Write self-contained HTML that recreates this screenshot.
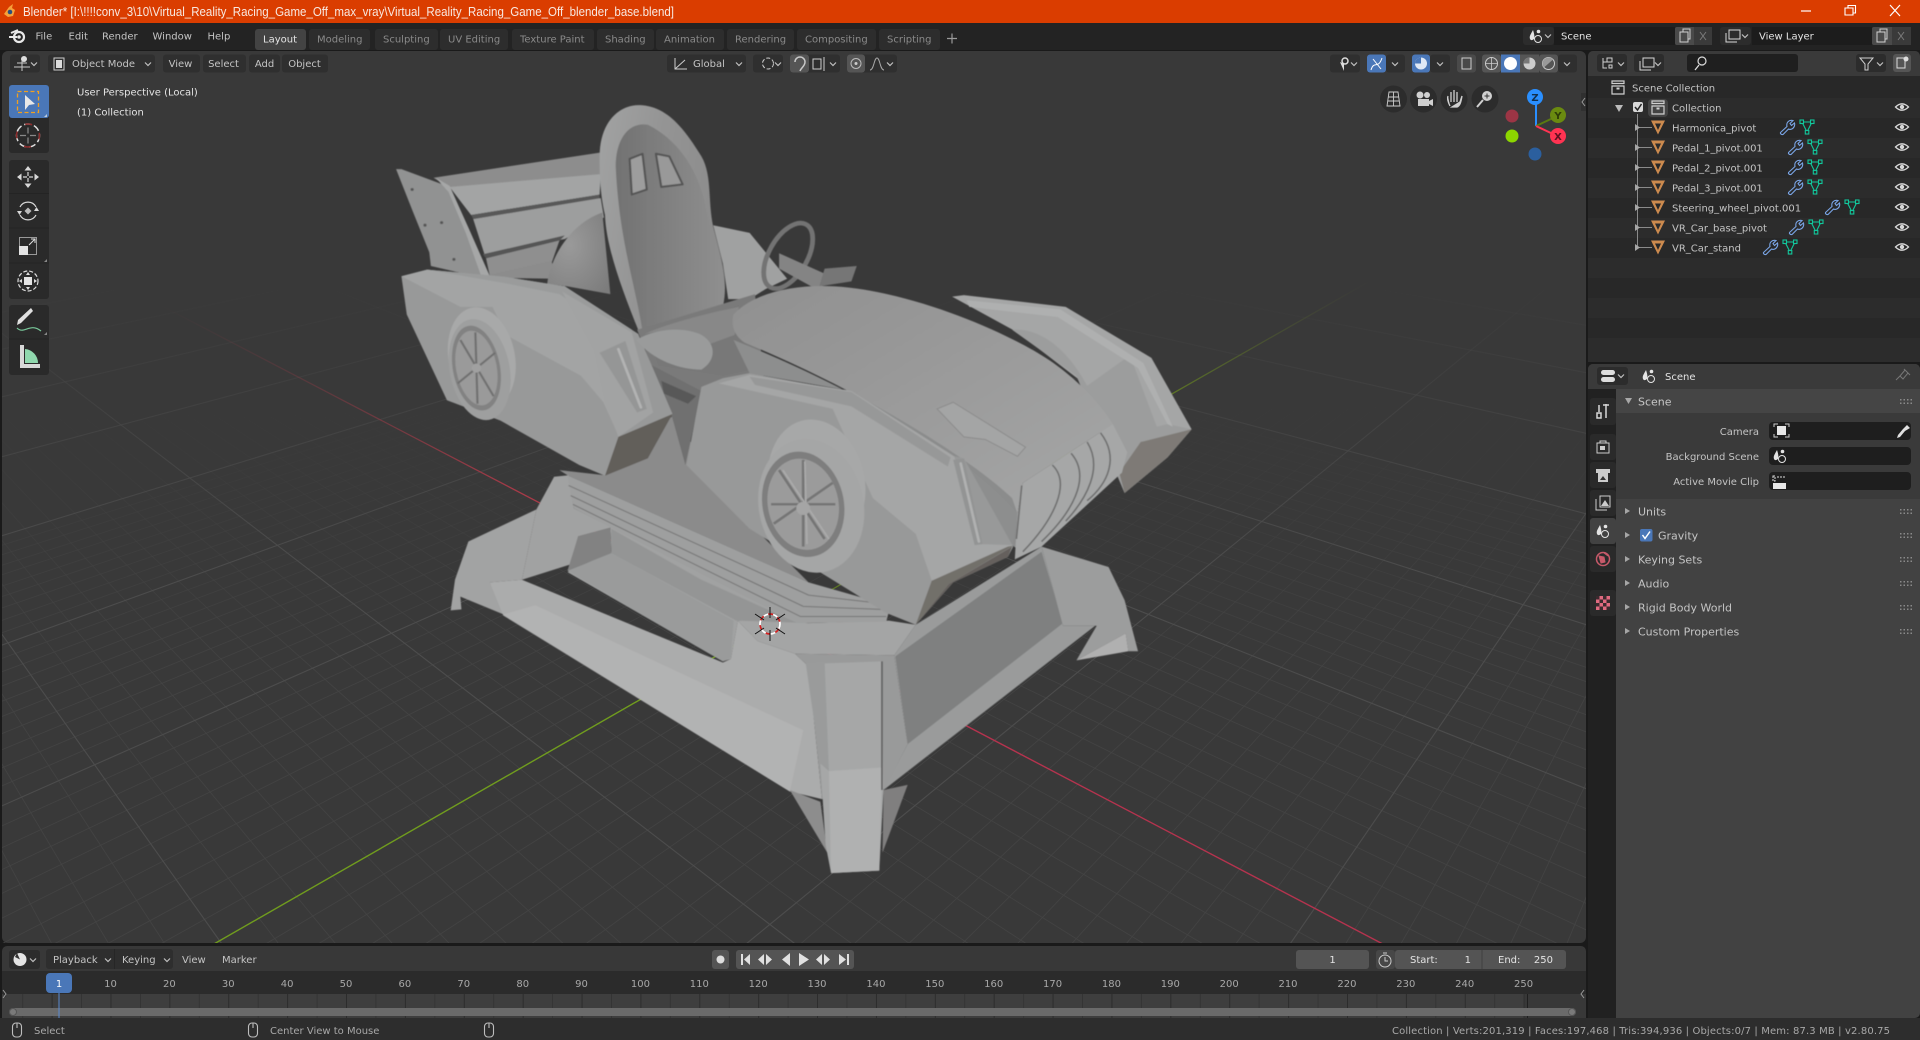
<!DOCTYPE html>
<html><head><meta charset="utf-8"><title>Blender</title>
<style>
html,body{margin:0;padding:0;width:1920px;height:1040px;overflow:hidden;background:#1a1a1a}
#vp{position:absolute;left:2px;top:51px;width:1584px;height:892px;background:#393939;border-radius:6px}
svg#ui{position:absolute;left:0;top:0;display:block}
text{font-family:"DejaVu Sans","Liberation Sans",sans-serif;font-size:10px;fill:#c4c4c4}
.m{text-anchor:middle}.e{text-anchor:end}
.d{fill:#8a8a8a}.w{fill:#e4e4e4}
.s{fill:#a8a8a8}
</style></head><body>
<div id="vp"></div>
<svg id="ui" width="1920" height="1040" viewBox="0 0 1920 1040" xmlns="http://www.w3.org/2000/svg">
<defs>
<clipPath id="vc"><rect x="2" y="51" width="1584" height="892"/></clipPath>
<filter id="soft" x="-5%" y="-5%" width="110%" height="110%"><feGaussianBlur stdDeviation="1.100"/></filter>
<linearGradient id="maj" gradientUnits="userSpaceOnUse" x1="0" y1="285" x2="0" y2="570"><stop offset="0" stop-color="#4c4c4c" stop-opacity="0"/><stop offset="1" stop-color="#4c4c4c"/></linearGradient>
<linearGradient id="min" gradientUnits="userSpaceOnUse" x1="0" y1="400" x2="0" y2="680"><stop offset="0" stop-color="#434343" stop-opacity="0"/><stop offset="1" stop-color="#434343"/></linearGradient>
<linearGradient id="rg" gradientUnits="userSpaceOnUse" x1="160" y1="305" x2="520" y2="494"><stop offset="0" stop-color="#6a3a40" stop-opacity="0"/><stop offset="1" stop-color="#a83a48"/></linearGradient>
<linearGradient id="gg" gradientUnits="userSpaceOnUse" x1="1370" y1="281" x2="1170" y2="395"><stop offset="0" stop-color="#4c5234" stop-opacity="0"/><stop offset="1" stop-color="#5c7426"/></linearGradient>
<linearGradient id="seat" x1="0" y1="0" x2="1" y2="0.3"><stop offset="0" stop-color="#a2a3a3"/><stop offset=".5" stop-color="#949494"/><stop offset="1" stop-color="#8c8c8c"/></linearGradient>
<linearGradient id="seatin" x1="0" y1="0" x2="1" y2="0"><stop offset="0" stop-color="#727272"/><stop offset=".6" stop-color="#848484"/><stop offset="1" stop-color="#8f8f8f"/></linearGradient>
<linearGradient id="hood" x1="0" y1="0" x2="1" y2="1"><stop offset="0" stop-color="#909090"/><stop offset=".5" stop-color="#9b9b9b"/><stop offset="1" stop-color="#a6a7a7"/></linearGradient>
<radialGradient id="dome" cx=".35" cy=".4" r=".8"><stop offset="0" stop-color="#9a9a9a"/><stop offset="1" stop-color="#7c7c7c"/></radialGradient>
<g id="eye"><path d="M-6.500 0Q0-6.500 6.500 0Q0 6.500-6.500 0Z" fill="none" stroke="#d8d8d8" stroke-width="1.300"/><circle r="2.200" fill="#d8d8d8"/></g>
<g id="tri"><path d="M-7-7H7L0 7Z M-3-4H3L0 2.500Z" fill-rule="evenodd" fill="#cc8a4e"/></g>
<g id="wr"><path d="M-6.500 5.500L0-.5C-1-4.500 2-7.500 6-6.500L3-3.500 4.500-1.500 7.500-4C8.500 0 5 3.500 1.500 2L-4 7.500C-5.500 8-7 6.500-6.500 5.500Z" fill="none" stroke="#7aa5e6" stroke-width="1.100"/></g>
<g id="me" fill="none" stroke="#12c79c" stroke-width="1.100"><path d="M-5-5H5L0 5Z"/><rect x="-7" y="-7" width="3.500" height="3.500" fill="#2a2a2a"/><rect x="3.500" y="-7" width="3.500" height="3.500" fill="#2a2a2a"/><rect x="-1.700" y="3.500" width="3.500" height="3.500" fill="#2a2a2a"/></g>
<g id="coll" fill="none" stroke="#d0d0d0" stroke-width="1.200"><path d="M-6-6H6V-3.500H-6Z"/><path d="M-6-1H6V7H-6Z"/><path d="M-1.500 1.500H1.500" stroke-width="2"/></g>
<g id="arr"><path d="M0-3.500L5 0 0 3.500Z" fill="#a6a6a6"/></g>
<g id="chev"><path d="M-3-1.500L0 1.500 3-1.500" fill="none" stroke="#c0c0c0" stroke-width="1.200"/></g>
<g id="grip" fill="#8a8a8a"><rect x="0" y="0" width="1.500" height="1.500"/><rect x="3.500" y="0" width="1.500" height="1.500"/><rect x="7" y="0" width="1.500" height="1.500"/><rect x="10.500" y="0" width="1.500" height="1.500"/><rect x="0" y="3.500" width="1.500" height="1.500"/><rect x="3.500" y="3.500" width="1.500" height="1.500"/><rect x="7" y="3.500" width="1.500" height="1.500"/><rect x="10.500" y="3.500" width="1.500" height="1.500"/></g>
<g id="scn"><path d="M-3-6C-5-2-7 0-6 3-5 5-3 4-2 3-1 1-2-3-3-6Z" fill="#e4e4e4"/><circle cx="2.500" cy="-4.500" r="1.800" fill="#e4e4e4"/><circle cx="2" cy="3" r="3.500" fill="none" stroke="#e4e4e4" stroke-width="1"/></g>
<g id="mouse" fill="none" stroke="#bdbdbd" stroke-width="1.100"><rect x="-4.500" y="-7" width="9" height="14" rx="3.500"/><path d="M0-7V-2"/></g>
<pattern id="ticks" patternUnits="userSpaceOnUse" x="110.500" y="0" width="58.880" height="30"><rect x="0" width="1" height="30" fill="#2c2c2c"/><rect x="29.440" width="1" height="30" fill="#343434"/></pattern>
</defs>

<!-- floor grid -->
<g clip-path="url(#vc)" fill="none">
<g stroke="url(#min)" stroke-width=".8">
<path d="M1990-75L1591 1030M1990-75L1531 1030M1990-75L1470 1030M1990-75L1411 1030M1990-75L1351 1030M1990-75L1291 1030M1990-75L1172 1030M1990-75L1112 1030M1990-75L1053 1030M1990-75L994 1030M1990-75L935 1030M1990-75L875 1030M1990-75L817 1030M1990-75L758 1030M1990-75L700 1030M1990-75L583 1030M1990-75L525 1030M1990-75L467 1030M1990-75L408 1030M1990-75L351 1030M1990-75L293 1030M1990-75L235 1030M1990-75L177 1030M1990-75L120 1030M1990-75L6 1030M1990-75L-52 1030M1990-75L-100 1025M1990-75L-100 996M1990-75L-100 969M1990-75L-100 943M1990-75L-100 918M1990-75L-100 895M1990-75L-100 872M1990-75L-100 830M1990-75L-100 811M1990-75L-100 792M1990-75L-100 775M1990-75L-100 757M1990-75L-100 741M1990-75L-100 725M1990-75L-100 710M1990-75L-100 696M1990-75L-100 669M1990-75L-100 656M1990-75L-100 643M1990-75L-100 631M1990-75L-100 620M1990-75L-100 608M1990-75L-100 598M1990-75L-100 587M1990-75L-100 577"/>
<path d="M-470-30L98 1030M-470-30L160 1030M-470-30L221 1030M-470-30L345 1030M-470-30L407 1030M-470-30L469 1030M-470-30L531 1030M-470-30L593 1030M-470-30L655 1030M-470-30L718 1030M-470-30L781 1030M-470-30L844 1030M-470-30L969 1030M-470-30L1032 1030M-470-30L1096 1030M-470-30L1159 1030M-470-30L1222 1030M-470-30L1287 1030M-470-30L1351 1030M-470-30L1414 1030M-470-30L1479 1030M-470-30L1608 1030M-470-30L1672 1030M-470-30L1700 1012M-470-30L1700 983M-470-30L1700 955M-470-30L1700 928M-470-30L1700 902M-470-30L1700 878M-470-30L1700 855M-470-30L1700 813M-470-30L1700 793M-470-30L1700 774M-470-30L1700 756M-470-30L1700 738M-470-30L1700 721M-470-30L1700 706M-470-30L1700 690M-470-30L1700 675M-470-30L1700 647M-470-30L1700 634M-470-30L1700 622M-470-30L1700 609M-470-30L1700 597M-470-30L1700 586M-470-30L1700 575M-470-30L1700 564M-470-30L1700 554"/>
</g>
<g stroke="url(#maj)" stroke-width="1.100">
<path d="M1990-75L1231 1030M1990-75L641 1030M1990-75L-100 851M1990-75L-100 682M1990-75L-100 567M1990-75L-100 484M1990-75L-100 421M1990-75L-100 371M1990-75L-100 332"/>
<path d="M-470-30L283 1030M-470-30L907 1030M-470-30L1700 834M-470-30L1700 661M-470-30L1700 544M-470-30L1700 459M-470-30L1700 395M-470-30L1700 345M-470-30L1700 304"/>
</g>
<!-- axes -->
<path d="M160 305L772 624" stroke="url(#rg)" stroke-width="1.300"/>
<path d="M772 624L1400 953" stroke="#b5334e" stroke-width="1.400"/>
<path d="M200 952L772 624" stroke="#709c1e" stroke-width="1.400"/>
<path d="M772 624L1170 395" stroke="#5c7426" stroke-width="1.300"/>
<path d="M1170 395L1370 281" stroke="url(#gg)" stroke-width="1.300"/>
</g>

<!-- MODEL -->
<g transform="translate(380,90) scale(.5357,.5102)" filter="url(#soft)">
<!-- wing -->
<path d="M100 172L415 122 412 168 130 192Z" fill="#8d8d8d"/>
<path d="M130 190L412 165 410 205 170 245Z" fill="#a3a4a4"/>
<path d="M170 245L410 205 410 213 174 253Z" fill="#585858"/>
<path d="M174 253L412 212 418 250 345 292 195 322Z" fill="#9d9e9e"/>
<path d="M192 322L345 285 335 296 198 330Z" fill="#555"/>
<path d="M198 330L335 295 320 340 205 365Z" fill="#8f8f8f"/>
<path d="M30 155L40 155 130 190 165 270 205 365 190 368 95 345 92 318 62 240Z" fill="#919292"/>
<path d="M104 172L130 188 165 270 205 365 190 368 160 280 128 200Z" fill="#a6a7a7"/>
<g fill="#555"><circle cx="60" cy="195" r="3"/><circle cx="84" cy="265" r="3"/><circle cx="115" cy="260" r="3"/><circle cx="138" cy="332" r="3"/></g>
<!-- far pod -->
<path d="M1068 405L1090 402 1280 425 1440 525 1515 665 1470 720 1390 790 1370 740 1320 580 1190 475Z" fill="#a5a6a6"/>
<path d="M1180 470C1240 465 1290 520 1320 580L1400 520 1450 660 1470 655 1515 665 1470 720 1390 790 1370 740 1300 560Z" fill="#9c9d9d"/>
<path d="M1095 412L1270 430 1425 535 1480 660 1470 655 1415 545 1265 445 1100 425Z" fill="#afb0b0"/>
<path d="M1420 690L1515 665 1470 720 1390 790 1380 750Z" fill="#7e7a76"/>
<!-- far rear rim -->
<path d="M622 265L690 280 760 370 720 390 690 410 650 410 640 340Z" fill="#a0a1a1"/>
<path d="M205 362L320 335 330 370 212 368Z" fill="#8c8c8c"/>
<!-- dome -->
<path d="M312 380C320 320 360 260 415 240L430 400 350 385Z" fill="url(#dome)"/>
<!-- seat back -->
<path d="M410 130C410 60 450 25 490 30 540 35 570 80 600 130 622 170 610 225 625 280 640 340 650 380 640 425L485 478C455 400 422 310 420 245 410 200 410 160 410 130Z" fill="url(#seat)"/>
<path d="M440 150C440 95 465 62 500 68 552 95 590 150 605 215 620 290 650 350 640 425L490 472C476 380 446 290 440 150Z" fill="url(#seatin)"/>
<path d="M466 135L490 125 498 195 470 205Z" fill="#9d9d9d" stroke="#555" stroke-width="4" stroke-linejoin="round"/>
<path d="M515 125L540 130 565 185 525 190Z" fill="#999" stroke="#555" stroke-width="4" stroke-linejoin="round"/>
<!-- steering -->
<ellipse cx="762" cy="325" rx="36" ry="70" transform="rotate(28 762 325)" fill="none" stroke="#737373" stroke-width="9"/>
<path d="M745 320L830 360 825 385 805 385 745 350Z" fill="#848484"/>
<path d="M830 350L890 345 880 375 820 385Z" fill="#767676"/>
<!-- interior -->
<path d="M480 470L700 400 720 600 600 600 545 640Z" fill="#7a7a7a"/>
<path d="M500 480L670 422 692 548 640 560 520 540Z" fill="#787878"/>
<!-- underbody -->
<path d="M335 745L420 755 545 640 700 860 800 965 350 755Z" fill="#8b8b8b"/>
<path d="M490 530L600 590 570 735 545 640Z" fill="#707070"/>
<path d="M525 570L590 600 575 615 530 595Z" fill="#585858"/>
<!-- base -->
<path d="M132 1020L140 960 165 885 292 822 265 960 205 965 240 1032 150 993 152 1018Z" fill="#a2a3a3"/>
<path d="M292 822L325 758 352 755 362 820 800 1050 668 1040 655 1115 640 1120 350 945 432 905 430 858 370 875 355 930 265 960Z" fill="#a1a2a2"/>
<path d="M370 875L430 858 432 908 350 942Z" fill="#828282"/>
<path d="M432 860L600 960 780 1045 665 1040 432 908Z" fill="#949595"/>
<path d="M350 942L432 908 660 1040 655 1112 640 1120Z" fill="#9a9b9b"/>
<path d="M205 965L265 960 640 1122 655 1115 668 1040 705 1080 775 1105 800 1130 825 1390 765 1375 230 1030Z" fill="#abacac"/>
<path d="M230 1028L290 1010 790 1255 765 1375Z" fill="#b2b3b3"/>
<path d="M668 1040L800 1045 950 1040 1000 1048 960 1108 775 1105 705 1080Z" fill="#a4a5a5"/>
<path d="M960 1108L1000 1048 1235 895 1275 1050 1335 1050 940 1372 985 1282Z" fill="#9a9b9b"/>
<path d="M962 1110L1235 905 1275 1045 985 1282Z" fill="#7f8080"/>
<path d="M775 1105L960 1108 985 1282 942 1370 825 1390 800 1130Z" fill="#999a9a"/>
<path d="M1235 895L1360 935 1390 1000 1415 1100 1397 1100 1392 1065 1300 1118 1338 1050 1275 1050Z" fill="#9c9d9d"/>
<path d="M1300 1118L1392 1065 1397 1100Z" fill="#b0b0b0"/>
<path d="M765 1372L822 1395 835 1495Z" fill="#8d8d8d"/>
<path d="M940 1372L985 1362 938 1495Z" fill="#807f7f"/>
<path d="M795 1125L937 1120 940 1370 932 1530 842 1535 832 1480 822 1320Z" fill="#a6a7a7"/>
<path d="M838 1335L937 1328 932 1530 842 1535Z" fill="#b0b1b1"/>
<path d="M795 1125L830 1120 838 1335 822 1320Z" fill="#9a9b9b"/>
<path d="M937 1120V1372" stroke="#5c5c5c" stroke-width="3"/>
<!-- layered plates -->
<path d="M350 755L800 965 900 995 950 1022 945 1042 780 1045 362 820Z" fill="#9e9f9f"/>
<g fill="none" stroke="#757575" stroke-width="2"><path d="M352 775L800 990 925 1005"/><path d="M356 795L790 1012 935 1018"/><path d="M360 812L785 1032 945 1032"/></g>
<!-- left body -->
<path d="M40 365L88 352 232 366 345 385 482 478 546 635 500 722 420 756 372 735 225 648 125 608 50 440Z" fill="#989999"/>
<path d="M40 365L88 352 345 385 470 470 446 680 417 612 375 560 235 480 210 425 150 425Z" fill="#a3a4a4"/>
<path d="M88 352L232 366 345 385 470 470 462 492 335 400 230 378Z" fill="#9a9b9b"/>
<path d="M340 395L470 475 510 632 445 680 420 610 400 510Z" fill="#a2a3a3"/>
<path d="M410 515L458 492 498 625 480 632Z" fill="#959696"/>
<path d="M445 508L487 622" stroke="#b2b3b3" stroke-width="5" stroke-linecap="round"/>
<path d="M445 680L546 635 500 722 420 756Z" fill="#625e5a"/>
<ellipse cx="190" cy="525" rx="62" ry="100" transform="rotate(-10 190 525)" fill="#a8a9a9"/>
<ellipse cx="186" cy="548" rx="56" ry="100" transform="rotate(-10 186 548)" fill="#9e9f9f"/>
<ellipse cx="180" cy="545" rx="44" ry="84" transform="rotate(-10 180 545)" fill="#828282"/>
<ellipse cx="180" cy="545" rx="38" ry="74" transform="rotate(-10 180 545)" fill="#9a9a9a"/>
<g stroke="#707070" stroke-width="4"><path d="M150 490L212 600"/><path d="M145 575L215 515"/><path d="M178 475L182 615"/></g>
<circle cx="180" cy="545" r="9" fill="#a0a0a0"/>
<!-- cushion -->
<path d="M495 478C530 460 600 440 670 425L662 480 610 500C580 470 530 470 495 478Z" fill="#888"/>
<path d="M478 490C520 465 570 465 600 480 628 497 628 530 600 548 560 548 510 530 478 490Z" fill="#9a9b9b"/>
<!-- hood -->
<path d="M880 590L1190 770 1190 900 1060 800Z" fill="#8b8c8c"/>
<path d="M660 440C700 395 780 380 850 385 1000 395 1180 480 1250 530 1320 580 1360 640 1368 655L1200 770 1190 830 1180 800C1100 720 900 590 680 495 660 480 655 460 660 440Z" fill="url(#hood)"/>
<path d="M660 490C900 590 1100 720 1190 830L1180 900 1060 720 880 590 690 555Z" fill="#8d8e8e"/>
<path d="M1040 625L1070 612 1205 700 1190 718 1130 685 1090 680Z" fill="#a4a5a5" stroke="#8c8c8c" stroke-width="2"/>
<!-- nose/grille -->
<path d="M1200 770L1368 655 1395 710 1385 750 1235 895 1185 920 1190 830Z" fill="#a6a7a7"/>
<g fill="none" stroke="#6e6e6e" stroke-width="3"><path d="M1255 735C1290 770 1260 840 1200 905"/><path d="M1290 712C1330 760 1290 830 1235 885"/><path d="M1320 690C1350 740 1320 800 1280 845"/><path d="M1345 672C1380 720 1360 770 1320 805"/><path d="M1198 775L1188 880"/></g>
<!-- front body -->
<path d="M572 735L600 582 640 565 690 555 880 592 1060 715 1090 722 1182 895 1172 915 1070 965 1000 1048 945 1025 690 860Z" fill="#989999"/>
<path d="M632 575L690 558 880 590 1072 718 1122 890 1182 892 1062 968 1030 962 1000 870 920 800 845 625Z" fill="#a5a6a6"/>
<path d="M690 562L880 592 1065 720 1060 738 880 620 700 578Z" fill="#979898"/>
<path d="M1070 725L1090 722 1125 890 1110 892Z" fill="#939494"/>
<path d="M1084 732L1118 885" stroke="#b0b1b1" stroke-width="5" stroke-linecap="round"/>
<path d="M1172 895L1182 893 1062 968 1000 1048 1030 962Z" fill="#726f6b"/>
<path d="M1000 1048L1062 968 1180 895 1172 915 1070 965Z" fill="#65615d"/>
<ellipse cx="815" cy="770" rx="90" ry="125" transform="rotate(-10 815 770)" fill="#a7a8a8"/>
<ellipse cx="805" cy="815" rx="98" ry="132" transform="rotate(-10 805 815)" fill="#a5a6a6"/>
<ellipse cx="790" cy="812" rx="76" ry="104" transform="rotate(-10 790 812)" fill="#7e7e7e"/>
<ellipse cx="790" cy="812" rx="66" ry="90" transform="rotate(-10 790 812)" fill="#9b9b9b"/>
<g stroke="#747474" stroke-width="5"><path d="M745 745L830 880"/><path d="M735 850L845 770"/><path d="M790 725V895"/><path d="M730 812H850"/></g>
<g stroke="#acacac" stroke-width="3"><path d="M752 745L838 880"/><path d="M793 728L797 890"/></g>
<circle cx="790" cy="820" r="13" fill="#a5a5a5"/>
</g>

<!-- 3D cursor -->
<g transform="translate(770,624)"><circle r="10" fill="none" stroke="#fff" stroke-width="1.700" stroke-dasharray="5 5"/><circle r="10" fill="none" stroke="#d42020" stroke-width="1.700" stroke-dasharray="5 5" stroke-dashoffset="5"/><g stroke="#111" stroke-width="1"><path d="M0-17V-6M0 6V17M-15-10L-6-4M6 4L15 10M-15 10L-6 4M6-4L15-10"/></g></g>

<!-- title bar -->
<rect x="0" y="0" width="1920" height="23" fill="#da3d00"/>
<path d="M4 14L9 7 13 4 12 8 15 10 13 16 8 17Z" fill="#f7a13a"/><circle cx="10" cy="12" r="2.300" fill="#2a4f80"/>
<text x="23" y="16" textLength="651" lengthAdjust="spacingAndGlyphs" style="font:12.500px 'Liberation Sans',sans-serif;fill:#f8e8e0">Blender* [I:\!!!!conv_3\10\Virtual_Reality_Racing_Game_Off_max_vray\Virtual_Reality_Racing_Game_Off_blender_base.blend]</text>
<path d="M1801 11H1811" stroke="#fff" stroke-width="1.200"/>
<path d="M1845 8H1853V15H1845ZM1848 8V5.500H1855.500V13H1853" fill="none" stroke="#fff" stroke-width="1.100"/>
<path d="M1890 5L1900 16M1900 5L1890 16" stroke="#fff" stroke-width="1.200"/>

<!-- top bar -->
<rect x="0" y="23" width="1920" height="27" fill="#232323"/>
<g transform="translate(18,36)"><circle cx="1" cy="1" r="5" fill="none" stroke="#e8e8e8" stroke-width="2.200"/><path d="M-9 1H-1M-7-3L0-6" stroke="#e8e8e8" stroke-width="2" fill="none"/><circle cx="1" cy="1" r="1.800" fill="#e8e8e8"/></g>
<text x="35.500" y="39.500">File</text><text x="68.500" y="39.500">Edit</text><text x="102" y="39.500">Render</text><text x="152.500" y="39.500">Window</text><text x="207.500" y="39.500">Help</text>
<g fill="#2d2d2d"><rect x="255" y="29" width="51" height="21" rx="3" fill="#434343"/><rect x="309" y="29" width="61" height="21" rx="3"/><rect x="375" y="29" width="63" height="21" rx="3"/><rect x="440" y="29" width="68" height="21" rx="3"/><rect x="512" y="29" width="82" height="21" rx="3"/><rect x="597" y="29" width="57" height="21" rx="3"/><rect x="656" y="29" width="68" height="21" rx="3"/><rect x="727" y="29" width="67" height="21" rx="3"/><rect x="797" y="29" width="79" height="21" rx="3"/><rect x="879" y="29" width="61" height="21" rx="3"/></g>
<text x="263" y="42.500" class="w">Layout</text><text x="317" y="42.500" class="d">Modeling</text><text x="383" y="42.500" class="d">Sculpting</text><text x="448" y="42.500" class="d">UV Editing</text><text x="520" y="42.500" class="d">Texture Paint</text><text x="605" y="42.500" class="d">Shading</text><text x="664" y="42.500" class="d">Animation</text><text x="735" y="42.500" class="d">Rendering</text><text x="805" y="42.500" class="d">Compositing</text><text x="887" y="42.500" class="d">Scripting</text>
<path d="M947 38.500H957M952 33.500V43.500" stroke="#9a9a9a" stroke-width="1.200"/>
<!-- scene selector -->
<rect x="1523" y="27" width="31" height="18" rx="3" fill="#2c2c2c"/><use href="#scn" x="1536" y="36"/><use href="#chev" x="1548" y="36"/>
<rect x="1554" y="27" width="121" height="18" fill="#1c1c1c"/><text x="1561" y="39.500" class="w">Scene</text>
<rect x="1675" y="27" width="37" height="18" rx="2" fill="#4a4a4a"/><rect x="1694" y="27" width="18" height="18" fill="#3a3a3a"/>
<path d="M1680 32H1688V42H1680ZM1683 32V29H1690V39H1688" fill="none" stroke="#d0d0d0"/><path d="M1700 32L1706 40M1706 32L1700 40" stroke="#7a7a7a"/>
<rect x="1720" y="27" width="31" height="18" rx="3" fill="#2c2c2c"/><path d="M1729 30H1740V39H1729ZM1726 33V42H1737" fill="none" stroke="#d8d8d8"/><use href="#chev" x="1745" y="36"/>
<rect x="1752" y="27" width="120" height="18" fill="#1c1c1c"/><text x="1759" y="39.500" class="w">View Layer</text>
<rect x="1872" y="27" width="39" height="18" rx="2" fill="#4a4a4a"/><rect x="1892" y="27" width="19" height="18" fill="#3a3a3a"/>
<path d="M1877 32H1885V42H1877ZM1880 32V29H1887V39H1885" fill="none" stroke="#d0d0d0"/><path d="M1898 32L1904 40M1904 32L1898 40" stroke="#7a7a7a"/>

<!-- 3D header -->
<g fill="#2f2f2f">
<rect x="10" y="54.500" width="30" height="18" rx="3"/><rect x="48" y="54.500" width="107" height="18" rx="3"/><rect x="163" y="54.500" width="37" height="18" rx="3"/><rect x="203" y="54.500" width="43" height="18" rx="3"/><rect x="249" y="54.500" width="31" height="18" rx="3"/><rect x="282" y="54.500" width="46" height="18" rx="3"/>
<rect x="667" y="54.500" width="79" height="18" rx="3"/><rect x="753" y="54.500" width="30" height="18" rx="3"/><rect x="790" y="54.500" width="50" height="18" rx="3"/><rect x="847" y="54.500" width="50" height="18" rx="3"/>
<rect x="1330" y="54.500" width="30" height="18" rx="3"/><rect x="1386" y="54.500" width="19" height="18" rx="3"/><rect x="1430" y="54.500" width="20" height="18" rx="3"/><rect x="1558" y="54.500" width="19" height="18" rx="3"/>
</g>
<rect x="790" y="54.500" width="19" height="18" rx="3" fill="#555"/><rect x="847" y="54.500" width="18" height="18" rx="3" fill="#555"/>
<rect x="1367" y="54.500" width="19" height="18" rx="3" fill="#4a77b8"/><rect x="1412" y="54.500" width="18" height="18" rx="3" fill="#4a77b8"/><rect x="1457" y="54.500" width="19" height="18" rx="3" fill="#4a4a4a"/>
<rect x="1482" y="54.500" width="19" height="18" rx="3" fill="#555"/><rect x="1501" y="54.500" width="19" height="18" fill="#4a77b8"/><rect x="1520" y="54.500" width="19" height="18" fill="#555"/><rect x="1539" y="54.500" width="19" height="18" rx="3" fill="#555"/>
<path d="M14 67H30M22 59V71M17 63H27" stroke="#c8c8c8" fill="none"/><circle cx="24" cy="59" r="3" fill="#ddd"/><use href="#chev" x="34" y="64"/>
<rect x="54" y="58" width="10" height="12" fill="none" stroke="#ccc"/><rect x="56" y="60" width="6" height="8" fill="#ddd"/>
<text x="72" y="67">Object Mode</text><use href="#chev" x="148" y="64"/>
<text x="180.500" y="67" class="m">View</text><text x="223.500" y="67" class="m">Select</text><text x="264.500" y="67" class="m">Add</text><text x="304.500" y="67" class="m">Object</text>
<path d="M675 58V69H687M675 69L685 60" stroke="#ccc" fill="none"/><text x="693" y="67">Global</text><use href="#chev" x="739" y="64"/>
<circle cx="768" cy="63.500" r="5.500" fill="none" stroke="#ccc" stroke-dasharray="4 2"/><use href="#chev" x="778" y="64"/>
<path d="M795 62A5 5 0 0 1 805 62C805 66 801 68 800 71" fill="none" stroke="#c8c8c8" stroke-width="1.500"/>
<path d="M813 59H821V69H813ZM824 57V71" stroke="#ccc" fill="none"/><use href="#chev" x="833" y="64"/>
<circle cx="856" cy="63.500" r="5" fill="none" stroke="#bbb"/><circle cx="856" cy="63.500" r="1.500" fill="#ccc"/><path d="M870 70C874 70 874 58 877 58S880 70 884 70" fill="none" stroke="#a8a8a8"/><use href="#chev" x="890" y="64"/>
<g transform="translate(1345,63)"><circle cy="-2" r="3" fill="none" stroke="#ddd" stroke-width="1.500"/><path d="M-5 -1L-1 8 -1 1Z" fill="#ddd"/></g><use href="#chev" x="1354" y="64"/>
<path d="M1371 70C1374 60 1378 70 1382 58M1373 59L1381 69" stroke="#fff" fill="none"/><use href="#chev" x="1395" y="64"/>
<circle cx="1421" cy="63.500" r="6" fill="#dfe8f5"/><path d="M1421 63.500V57.500A6 6 0 0 0 1415 63.500Z" fill="#4a77b8"/><use href="#chev" x="1440" y="64"/>
<rect x="1462" y="58" width="9" height="11" fill="none" stroke="#ccc"/>
<circle cx="1491.500" cy="63.500" r="6" fill="none" stroke="#ccc"/><path d="M1491.500 57.500V69.500M1485.500 63.500H1497.500" stroke="#ccc" stroke-width=".8"/>
<circle cx="1510.500" cy="63.500" r="6.500" fill="#fff"/>
<circle cx="1529.500" cy="63.500" r="6" fill="#ccc"/><path d="M1529.500 63.500V57.500A6 6 0 0 0 1523.500 63.500Z" fill="#777"/>
<circle cx="1548.500" cy="63.500" r="6" fill="none" stroke="#ccc"/><path d="M1544 67.500A6 6 0 0 1 1553 59.500Z" fill="#999"/>
<use href="#chev" x="1567" y="64"/>

<!-- toolbar -->
<rect x="9" y="85" width="40" height="68" rx="3" fill="#2a2a2a"/><rect x="9" y="85" width="40" height="33" rx="3" fill="#4a77b8"/>
<rect x="9" y="160" width="40" height="139" rx="3" fill="#2a2a2a"/><rect x="9" y="305" width="40" height="70" rx="3" fill="#2a2a2a"/>
<path d="M9 193.500H49M9 228H49M9 263H49M9 339H49" stroke="#242424"/>
<rect x="17.500" y="91.500" width="21" height="21" fill="none" stroke="#f0a020" stroke-width="1.300" stroke-dasharray="4 2.500"/><path d="M25 95V110L29 105 35 104Z" fill="#e8e8e8"/>
<path d="M47 114V117H44Z" fill="#bcd"/>
<g transform="translate(28,135.500)"><circle r="11.500" fill="none" stroke="#ddd" stroke-width="1.500" stroke-dasharray="7 3"/><circle r="11.500" fill="none" stroke="#8e2a2a" stroke-width="1.500" stroke-dasharray="7 11" stroke-dashoffset="3"/><path d="M0-8V-2M0 2V8M-8 0H-2M2 0H8" stroke="#888" stroke-width="1.300"/></g>
<g transform="translate(28,177)" fill="#d8d8d8"><path d="M0-11L3.500-6.500H-3.500ZM0 11L3.500 6.500H-3.500ZM-11 0L-6.500-3.500V3.500ZM11 0L6.500-3.500V3.500Z"/><path d="M0-5V-1M0 1V5M-5 0H-1M1 0H5" stroke="#d8d8d8" stroke-width="1.200"/></g>
<g transform="translate(28,211)"><path d="M-8-4A9 9 0 0 1 8-4M-8 4A9 9 0 0 0 8 4" fill="none" stroke="#d8d8d8" stroke-width="1.200"/><path d="M0-3.500L3.500 0 0 3.500-3.500 0Z" fill="#bbb"/><path d="M-11 0H-6L-8.500 4ZM11 0H6L8.500-4Z" fill="#d8d8d8"/></g>
<g transform="translate(28,246)"><rect x="-8.500" y="-8.500" width="17" height="17" fill="none" stroke="#999" stroke-width="1"/><rect x="-9" y="0" width="9" height="9" fill="#e4e4e4"/><path d="M1-1L7-7M3-7H7V-3" stroke="#ddd" fill="none"/></g>
<path d="M47 259V262H44Z" fill="#888"/>
<g transform="translate(28,281)"><circle r="10" fill="none" stroke="#ddd" stroke-width="1.200" stroke-dasharray="4 2"/><rect x="-4" y="-4" width="8" height="8" fill="#e4e4e4"/><path d="M0-9L2-6H-2ZM0 9L2 6H-2ZM-9 0L-6-2V2ZM9 0L6-2V2Z" fill="#ddd"/></g>
<path d="M18 320L31 308 33 311 21 323 17 325Z" fill="#e0e0e0"/><path d="M17 328C24 335 30 322 41 331" fill="none" stroke="#78c89a" stroke-width="1.200"/><path d="M47 332V335H44Z" fill="#888"/>
<path d="M20 345H24V364H40V368H20Z" fill="#d8d8d8"/><path d="M25 349A14 14 0 0 1 38 363H25Z" fill="#90d8ae"/>
<text x="77" y="95.500" class="w">User Perspective (Local)</text><text x="77" y="115.500" class="w">(1) Collection</text>

<!-- nav gizmos -->
<g fill="#2c2c2c"><circle cx="1393.500" cy="99" r="13.500"/><circle cx="1423.500" cy="99" r="13.500"/><circle cx="1454" cy="99" r="13.500"/><circle cx="1485" cy="99" r="13.500"/></g>
<path d="M1389 92H1398L1400 106H1387ZM1393.500 92V106M1388 97H1399M1387.500 101H1399.500" fill="none" stroke="#ccc" stroke-width=".9"/>
<g fill="#d0d0d0"><circle cx="1420" cy="95" r="3.500"/><circle cx="1427" cy="95" r="3"/><rect x="1418" y="99" width="11" height="7"/><path d="M1429 101L1433 99V106L1429 104Z"/></g>
<path d="M1450 106C1448 102 1447 98 1448 96M1451 102V92M1454 102V90M1457 102V92M1460 102L1462 96C1461 102 1460 106 1457 107H1452Z" fill="#d0d0d0" stroke="#d0d0d0" stroke-width="1.300"/>
<circle cx="1487" cy="96" r="5" fill="#d0d0d0"/><path d="M1483 100L1477 107" stroke="#d0d0d0" stroke-width="2"/><path d="M1484.500 96H1489.500M1487 93.500V98.500" stroke="#333"/>
<!-- axis gizmo -->
<path d="M1536 126V104" stroke="#2a8fff" stroke-width="2"/><path d="M1536 126L1553 118" stroke="#5a7a10" stroke-width="2"/><path d="M1536 126L1553 134" stroke="#ff3352" stroke-width="2"/>
<circle cx="1512" cy="116" r="6.500" fill="#9c3545"/><circle cx="1512" cy="136" r="6.500" fill="#8cd600"/><circle cx="1535" cy="154" r="6.500" fill="#2b5f9e"/>
<circle cx="1535" cy="97" r="8" fill="#2a8fff"/><circle cx="1558" cy="115" r="8" fill="#6a8a10"/><circle cx="1558" cy="136" r="8" fill="#ff3352"/>
<text x="1535" y="101" class="m" style="font-weight:bold;fill:#12304f">Z</text><text x="1558" y="119" class="m" style="font-weight:bold;fill:#2e3c08">Y</text><text x="1558" y="140" class="m" style="font-weight:bold;fill:#5c1020">X</text>
<path d="M1581 93H1586V111H1581Z" fill="#303030"/><path d="M1585 98L1582 102 1585 106" stroke="#999" fill="none"/>

<!-- outliner -->
<rect x="1588" y="51" width="332" height="311" rx="5" fill="#282828"/>
<path d="M1588 76V56a5 5 0 0 1 5-5H1915a5 5 0 0 1 5 5V76Z" fill="#3a3a3a"/>
<g fill="#2c2c2c"><rect x="1597" y="54" width="30" height="18" rx="3"/><rect x="1634" y="54" width="30" height="18" rx="3"/><rect x="1856" y="54" width="30" height="18" rx="3"/></g>
<rect x="1687" y="54" width="111" height="18" rx="3" fill="#1f1f1f"/><rect x="1893" y="54" width="18" height="18" rx="3" fill="#555"/>
<path d="M1603 58V68H1607M1603 62H1607M1607 58H1612V62H1607ZM1609 65H1612V68H1609Z" fill="none" stroke="#d0d0d0"/><use href="#chev" x="1621" y="64"/>
<path d="M1643 58H1654V67H1643ZM1640 61V70H1651" fill="none" stroke="#d8d8d8"/><use href="#chev" x="1658" y="64"/>
<circle cx="1702" cy="61" r="4" fill="none" stroke="#ddd" stroke-width="1.200"/><path d="M1699 65L1695 70" stroke="#ddd" stroke-width="1.300"/>
<path d="M1860 58H1873L1868 64V70H1865V64Z" fill="none" stroke="#d0d0d0"/><use href="#chev" x="1880" y="64"/>
<rect x="1897" y="58" width="8" height="10" fill="none" stroke="#ddd"/><circle cx="1906" cy="59" r="2.500" fill="#ddd"/>
<g fill="#2c2c2c"><rect x="1588" y="98" width="332" height="20"/><rect x="1588" y="138" width="332" height="20"/><rect x="1588" y="178" width="332" height="20"/><rect x="1588" y="218" width="332" height="20"/><rect x="1588" y="258" width="332" height="20"/><rect x="1588" y="298" width="332" height="20"/><rect x="1588" y="338" width="332" height="24"/></g>
<use href="#coll" x="1618" y="87"/><text x="1632" y="91.500">Scene Collection</text>
<path d="M1615 105H1623L1619 112Z" fill="#bbb"/>
<rect x="1633" y="102" width="10" height="10" rx="2" fill="#d8d8d8"/><path d="M1635 107L1637.500 110 1641.500 104" stroke="#222" stroke-width="1.500" fill="none"/>
<rect x="1648" y="99" width="20" height="18" rx="4" fill="#444"/><use href="#coll" x="1658" y="107"/>
<text x="1672" y="111.500">Collection</text><use href="#eye" x="1902" y="107"/>
<path d="M1637.500 114V247" stroke="#8a8a8a"/>
<g stroke="#8a8a8a"><path d="M1637 127.500H1652M1637 147.500H1652M1637 167.500H1652M1637 187.500H1652M1637 207.500H1652M1637 227.500H1652M1637 247.500H1652"/></g>
<use href="#arr" x="1635" y="127.500"/><use href="#arr" x="1635" y="147.500"/><use href="#arr" x="1635" y="167.500"/><use href="#arr" x="1635" y="187.500"/><use href="#arr" x="1635" y="207.500"/><use href="#arr" x="1635" y="227.500"/><use href="#arr" x="1635" y="247.500"/>
<use href="#tri" x="1658" y="127.500"/><use href="#tri" x="1658" y="147.500"/><use href="#tri" x="1658" y="167.500"/><use href="#tri" x="1658" y="187.500"/><use href="#tri" x="1658" y="207.500"/><use href="#tri" x="1658" y="227.500"/><use href="#tri" x="1658" y="247.500"/>
<text x="1672" y="131.500">Harmonica_pivot</text><text x="1672" y="151.500">Pedal_1_pivot.001</text><text x="1672" y="171.500">Pedal_2_pivot.001</text><text x="1672" y="191.500">Pedal_3_pivot.001</text><text x="1672" y="211.500">Steering_wheel_pivot.001</text><text x="1672" y="231.500">VR_Car_base_pivot</text><text x="1672" y="251.500">VR_Car_stand</text>
<use href="#wr" x="1787" y="127"/><use href="#me" x="1807" y="127"/><use href="#wr" x="1795" y="147"/><use href="#me" x="1815" y="147"/><use href="#wr" x="1795" y="167"/><use href="#me" x="1815" y="167"/><use href="#wr" x="1795" y="187"/><use href="#me" x="1815" y="187"/><use href="#wr" x="1832" y="207"/><use href="#me" x="1852" y="207"/><use href="#wr" x="1796" y="227"/><use href="#me" x="1816" y="227"/><use href="#wr" x="1770" y="247"/><use href="#me" x="1790" y="247"/>
<use href="#eye" x="1902" y="127"/><use href="#eye" x="1902" y="147"/><use href="#eye" x="1902" y="167"/><use href="#eye" x="1902" y="187"/><use href="#eye" x="1902" y="207"/><use href="#eye" x="1902" y="227"/><use href="#eye" x="1902" y="247"/>

<!-- properties -->
<rect x="1588" y="364" width="332" height="654" rx="5" fill="#424242"/>
<rect x="1588" y="389" width="28" height="629" fill="#212121"/>
<path d="M1588 389V369a5 5 0 0 1 5-5H1915a5 5 0 0 1 5 5V389Z" fill="#3a3a3a"/>
<rect x="1597" y="367" width="31" height="18" rx="3" fill="#2c2c2c"/><rect x="1601" y="370" width="14" height="5" rx="2.500" fill="#ddd"/><rect x="1601" y="377" width="14" height="5" rx="2.500" fill="#ddd"/><use href="#chev" x="1621" y="376"/>
<use href="#scn" x="1649" y="376"/><text x="1665" y="380" class="w">Scene</text>
<path d="M1905 370L1908 373 1903 379 1900 376ZM1900 376L1896 380M1904 369L1910 375" stroke="#777" fill="none"/>
<g fill="#2a2a2a"><rect x="1590" y="398" width="26" height="27" rx="3"/><rect x="1590" y="434" width="26" height="26" rx="3"/><rect x="1590" y="462" width="26" height="26" rx="3"/><rect x="1590" y="490" width="26" height="26" rx="3"/><rect x="1590" y="546" width="26" height="26" rx="3"/><rect x="1590" y="590" width="26" height="26" rx="3"/></g>
<rect x="1590" y="518" width="26" height="26" rx="3" fill="#424242"/>
<path d="M1599 405V412M1597 413H1601V418H1597ZM1606 404V418M1603 405H1609" stroke="#d8d8d8" stroke-width="1.500" fill="none"/>
<path d="M1597 443H1609V453H1597ZM1600 443V441H1606V443" fill="none" stroke="#ccc"/><rect x="1600" y="446" width="5" height="4" fill="#ccc"/>
<path d="M1596 469H1610V473H1596ZM1598 473V482H1608V473" fill="#ccc"/><path d="M1600 480L1603 476 1606 480Z" fill="#333"/>
<path d="M1600 496H1610V507H1600ZM1596 499V510H1607" fill="none" stroke="#ccc"/><path d="M1601 506L1605 500 1609 506Z" fill="#ccc"/>
<use href="#scn" x="1603" y="531"/>
<circle cx="1603" cy="559" r="6.500" fill="none" stroke="#c85a6a" stroke-width="1.500"/><path d="M1599 556L1604 557 1605 562 1601 563ZM1604 553L1608 556" fill="#c85a6a" stroke="#c85a6a"/>
<rect x="1596" y="596" width="14" height="14" fill="#e06a80"/><path d="M1596 596h3.500v3.500h-3.500zM1603 596h3.500v3.500h-3.500zM1599.500 599.500h3.500v3.500h-3.500zM1606.500 599.500h3.500v3.500h-3.500zM1596 603h3.500v3.500h-3.500zM1603 603h3.500v3.500h-3.500zM1599.500 606.500h3.500v3.500h-3.500zM1606.500 606.500h3.500v3.500h-3.500z" fill="#3a2a2e"/>
<!-- scene panel -->
<rect x="1616" y="389" width="304" height="24" fill="#454545"/>
<rect x="1616" y="413" width="304" height="86" fill="#3a3a3a"/>
<path d="M1625 398H1632L1628.500 404Z" fill="#a8a8a8"/><text x="1638" y="405.500" class="s" style="fill:#c8c8c8;font-size:11px">Scene</text>
<use href="#grip" x="1900" y="399"/>
<text x="1759" y="435" class="e">Camera</text><text x="1759" y="460" class="e">Background Scene</text><text x="1759" y="485" class="e">Active Movie Clip</text>
<g fill="#1e1e1e"><rect x="1769" y="422" width="142" height="18" rx="4"/><rect x="1769" y="447" width="142" height="18" rx="4"/><rect x="1769" y="472" width="142" height="18" rx="4"/></g>
<rect x="1777" y="426" width="9" height="9" fill="#e8e8e8"/><path d="M1774 427V424H1778M1789 427V424H1785M1774 434V437H1778M1789 434V437H1785" stroke="#ccc" fill="none"/>
<path d="M1907 425L1910 428 1905 431 1900 437 1897 438 1898 435 1903 429Z" fill="#e0e0e0"/>
<use href="#scn" x="1780" y="456"/>
<rect x="1773" y="483" width="13" height="6" fill="#e8e8e8"/><path d="M1773 476H1775V481H1773ZM1777 477H1786" stroke="#ddd" fill="none" stroke-dasharray="2 1"/>
<g fill="#a6a6a6"><path d="M1625 508V514L1630 511Z"/><path d="M1625 532V538L1630 535Z"/><path d="M1625 556V562L1630 559Z"/><path d="M1625 580V586L1630 583Z"/><path d="M1625 604V610L1630 607Z"/><path d="M1625 628V634L1630 631Z"/></g>
<text x="1638" y="515.500" style="font-size:11px">Units</text>
<rect x="1640" y="529" width="12.500" height="12.500" rx="2" fill="#4a77b8"/><path d="M1642.500 535L1645 538.500 1650 531.500" stroke="#fff" stroke-width="1.500" fill="none"/>
<text x="1658" y="539.500" style="font-size:11px">Gravity</text>
<text x="1638" y="563.500" style="font-size:11px">Keying Sets</text><text x="1638" y="587.500" style="font-size:11px">Audio</text><text x="1638" y="611.500" style="font-size:11px">Rigid Body World</text><text x="1638" y="635.500" style="font-size:11px">Custom Properties</text>
<use href="#grip" x="1900" y="509"/><use href="#grip" x="1900" y="533"/><use href="#grip" x="1900" y="557"/><use href="#grip" x="1900" y="581"/><use href="#grip" x="1900" y="605"/><use href="#grip" x="1900" y="629"/>

<!-- timeline -->
<rect x="2" y="946" width="1584" height="72" rx="5" fill="#383838"/>
<rect x="2" y="971" width="1584" height="23" fill="#2b2b2b"/>
<rect x="2" y="994" width="1584" height="24" fill="#3e3e3e"/><rect x="2" y="994" width="1584" height="24" fill="url(#ticks)"/>
<rect x="1525" y="994" width="61" height="24" fill="#383838"/><path d="M1527.500 994V1018" stroke="#1f1f1f"/>
<rect x="9" y="950" width="31" height="19" rx="3" fill="#2c2c2c"/><circle cx="20" cy="959.500" r="6.500" fill="#e4e4e4"/><path d="M20 959.500L17 953 15 957Z" fill="#333"/><use href="#chev" x="33" y="960"/>
<rect x="46" y="949" width="127" height="20" rx="3" fill="#2e2e2e"/><path d="M114.500 949V969" stroke="#262626"/>
<text x="53" y="963">Playback</text><use href="#chev" x="108" y="960"/><text x="122" y="963">Keying</text><use href="#chev" x="167" y="960"/>
<text x="182" y="963">View</text><text x="222" y="963">Marker</text>
<rect x="712" y="950" width="17" height="19" rx="3" fill="#545454"/><circle cx="720.500" cy="959.500" r="4" fill="#ddd"/>
<rect x="736" y="950" width="118" height="19" rx="3" fill="#545454"/>
<g fill="#e0e0e0"><path d="M741 954H743V965H741ZM750 954V965L744 959.500Z"/><path d="M764 954V965L758 959.500ZM766 954V965L772 959.500Z"/><path d="M790 953V966L782 959.500Z"/><path d="M799 953V966L809 959.500Z"/><path d="M822 954V965L816 959.500ZM824 954V965L830 959.500Z"/><path d="M839 954V965L846 959.500ZM847 954H849V965H847Z"/></g>
<rect x="1296" y="950" width="73" height="19" rx="3" fill="#545454"/><text x="1332.500" y="963" class="m w">1</text>
<rect x="1376" y="950" width="19" height="19" rx="3" fill="#474747"/><circle cx="1385" cy="961" r="6" fill="none" stroke="#ccc"/><path d="M1385 957V961H1388M1383 953H1387" stroke="#ccc" fill="none"/>
<rect x="1395" y="950" width="171" height="19" rx="3" fill="#545454"/><path d="M1482 950V969" stroke="#3f3f3f"/>
<text x="1410" y="963" class="w">Start:</text><text x="1471" y="963" class="e w">1</text><text x="1498" y="963" class="w">End:</text><text x="1553" y="963" class="e w">250</text>
<text x="110.500" y="987" class="m s">10</text><text x="169.400" y="987" class="m s">20</text><text x="228.300" y="987" class="m s">30</text><text x="287.100" y="987" class="m s">40</text><text x="346" y="987" class="m s">50</text><text x="404.900" y="987" class="m s">60</text><text x="463.800" y="987" class="m s">70</text><text x="522.700" y="987" class="m s">80</text><text x="581.500" y="987" class="m s">90</text><text x="640.400" y="987" class="m s">100</text><text x="699.300" y="987" class="m s">110</text><text x="758.200" y="987" class="m s">120</text><text x="817" y="987" class="m s">130</text><text x="875.900" y="987" class="m s">140</text><text x="934.800" y="987" class="m s">150</text><text x="993.700" y="987" class="m s">160</text><text x="1052.600" y="987" class="m s">170</text><text x="1111.400" y="987" class="m s">180</text><text x="1170.300" y="987" class="m s">190</text><text x="1229.200" y="987" class="m s">200</text><text x="1288" y="987" class="m s">210</text><text x="1346.900" y="987" class="m s">220</text><text x="1405.800" y="987" class="m s">230</text><text x="1464.700" y="987" class="m s">240</text><text x="1523.600" y="987" class="m s">250</text>
<rect x="9" y="1008" width="1567" height="8" rx="4" fill="#6a6a6a"/><circle cx="13" cy="1012" r="3.500" fill="#7a7a7a" stroke="#555"/><circle cx="1572" cy="1012" r="3.500" fill="#7a7a7a" stroke="#555"/>
<rect x="46" y="973" width="26" height="20" rx="4" fill="#4a77b8"/><text x="59" y="987" class="m" style="fill:#fff">1</text>
<path d="M59 993V1018" stroke="#5a8ad0"/>
<path d="M2 993L6 989V997Z" fill="#2b2b2b"/><path d="M3 990L6 994 3 998" stroke="#999" fill="none"/>
<path d="M1584 990L1581 994 1584 998" stroke="#999" fill="none"/>

<!-- status bar -->
<rect x="0" y="1018" width="1920" height="22" fill="#2d2d2d"/>
<use href="#mouse" x="17" y="1030"/><text x="34" y="1034" class="s">Select</text>
<use href="#mouse" x="253" y="1030"/><text x="270" y="1034" class="s">Center View to Mouse</text>
<use href="#mouse" x="489" y="1030"/>
<text x="1392" y="1034" textLength="498" class="s">Collection | Verts:201,319 | Faces:197,468 | Tris:394,936 | Objects:0/7 | Mem: 87.3 MB | v2.80.75</text>
</svg>
</body></html>
